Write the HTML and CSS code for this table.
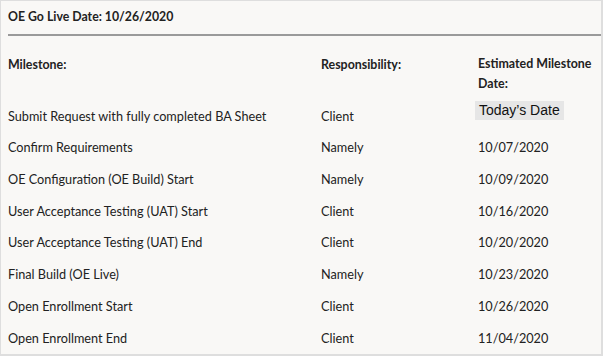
FILE: index.html
```html
<!DOCTYPE html>
<html>
<head>
<meta charset="utf-8">
<link rel="stylesheet" href="styles.css">
</head>
<body>
<div class="panel">
  <div class="title">OE Go Live Date: 10/26/2020</div>
  <div class="divider"></div>
  <div class="grid">
    <div class="head">Milestone:</div>
    <div class="head">Responsibility:</div>
    <div class="head">Estimated Milestone<br>Date:</div>

    <div class="cell">Submit Request with fully completed BA Sheet</div>
    <div class="cell">Client</div>
    <div class="cell"><span class="today">Today’s Date</span></div>

    <div class="cell">Confirm Requirements</div>
    <div class="cell">Namely</div>
    <div class="cell">10/07/2020</div>

    <div class="cell">OE Configuration (OE Build) Start</div>
    <div class="cell">Namely</div>
    <div class="cell">10/09/2020</div>

    <div class="cell">User Acceptance Testing (UAT) Start</div>
    <div class="cell">Client</div>
    <div class="cell">10/16/2020</div>

    <div class="cell">User Acceptance Testing (UAT) End</div>
    <div class="cell">Client</div>
    <div class="cell">10/20/2020</div>

    <div class="cell">Final Build (OE Live)</div>
    <div class="cell">Namely</div>
    <div class="cell">10/23/2020</div>

    <div class="cell">Open Enrollment Start</div>
    <div class="cell">Client</div>
    <div class="cell">10/26/2020</div>

    <div class="cell">Open Enrollment End</div>
    <div class="cell">Client</div>
    <div class="cell">11/04/2020</div>
  </div>
</div>
</body>
</html>
```
FILE: styles.css
```css
html, body {
  margin: 0;
  padding: 0;
  background: #dedede;
}
.panel {
  box-sizing: border-box;
  width: 600px;
  height: 353px;
  margin: 1px 0 0 1px;
  background: #f9f8f6;
  font-family: Lato, "Liberation Sans", sans-serif;
  font-size: 12.7px;
  color: #222;
  padding: 6px 0 0 7px;
}
.title {
  font-weight: 700;
  font-size: 12.3px;
  line-height: 20px;
}
.divider {
  height: 2px;
  background: #9a9a9a;
  margin: 7px 0 0 0;
}
.grid {
  display: grid;
  grid-template-columns: 313px 157px 1fr;
  margin-top: 18px;
  row-gap: 11.7px;
}
.head {
  font-weight: 700;
  font-size: 12.4px;
  line-height: 20px;
}
.cell {
  line-height: 20px;
}
.grid .head:nth-child(1), .grid .head:nth-child(2) {
  margin-top: 1px;
}
.today {
  display: inline-block;
  background: #e6e6e6;
  font-family: "Liberation Sans", Arial, sans-serif;
  font-size: 14px;
  color: #111;
  line-height: 19px;
  padding: 0 4px;
  margin: -5px 0 0 -3px;
  vertical-align: top;
}
```
